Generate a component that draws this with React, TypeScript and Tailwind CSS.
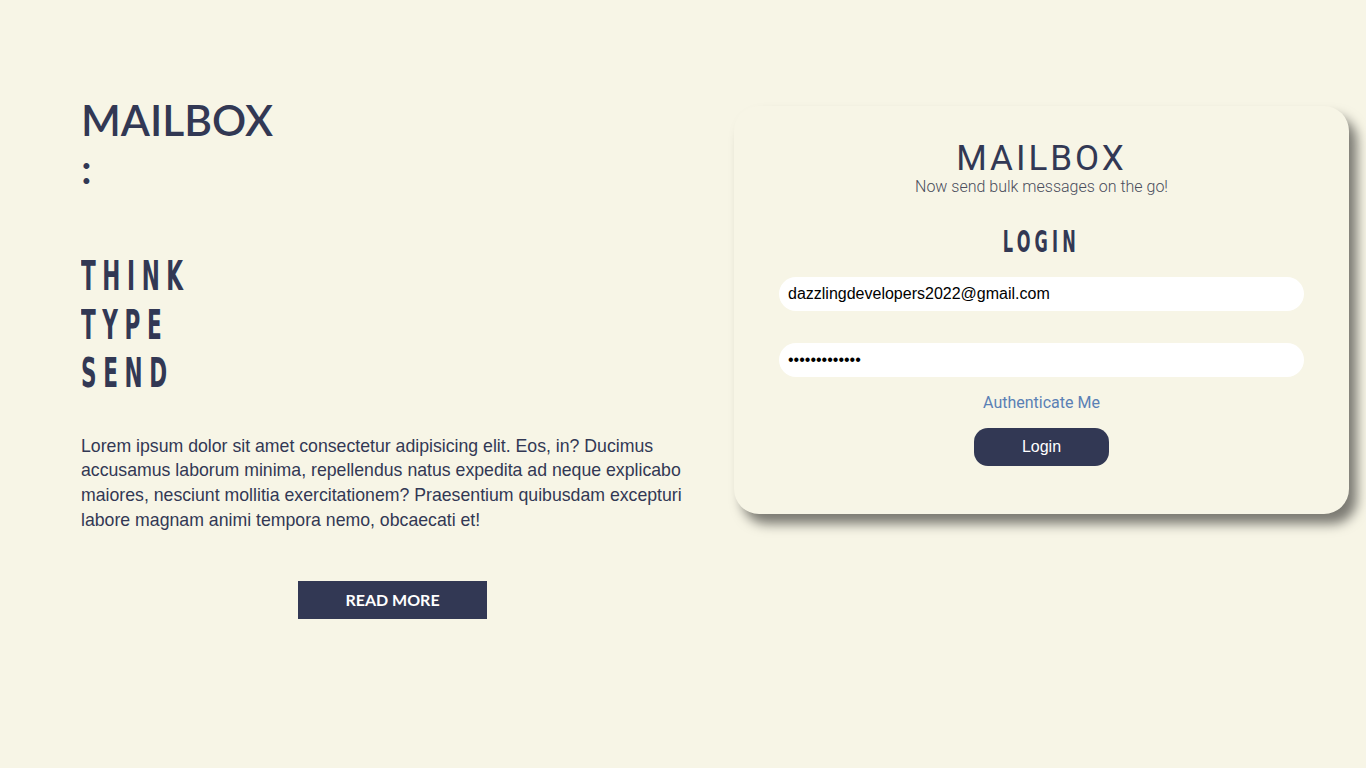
import React from "react";

const navy = "text-[#323854]";

export default function App() {
  return (
    <div className="min-h-[768px] w-full bg-[#f7f5e6] font-['Liberation_Sans',Arial,sans-serif]">
      <div className="flex items-start pl-[81px] pt-[96px]">
        {/* left column */}
        <div className="w-[623px] flex flex-col">
          <h1 className={`font-['Lato',sans-serif] text-[42.5px] leading-[48px] font-semibold ${navy}`}>
            MAILBOX
            <br />:
          </h1>

          <div className="mt-[60px] flex flex-col">
            {["THINK", "TYPE", "SEND"].map((w) => (
              <span
                key={w}
                className={`h-[48.5px] leading-[48.5px] font-['Liberation_Sans_Narrow','DejaVu_Sans_Condensed',sans-serif] font-bold text-[40px] tracking-[11px] inline-block origin-left scale-x-[0.6] ${navy}`}
              >
                {w}
              </span>
            ))}
          </div>

          <p className={`mt-[36px] text-[17.7px] leading-[24.7px] ${navy} pr-[10px]`}>
            Lorem ipsum dolor sit amet consectetur adipisicing elit. Eos, in? Ducimus accusamus laborum minima, repellendus natus expedita ad neque explicabo maiores, nesciunt mollitia exercitationem? Praesentium quibusdam excepturi labore magnam animi tempora nemo, obcaecati et!
          </p>

          <div className="mt-[49px] flex justify-center">
            <button className="w-[189px] h-[38px] bg-[#323854] text-white font-['Lato',sans-serif] font-bold text-[16px]">
              READ MORE
            </button>
          </div>
        </div>

        {/* login card */}
        <div className="ml-[30px] mt-[10px] w-[615px] rounded-[25px] bg-[#f7f5e6] shadow-[8px_10px_12px_rgba(0,0,0,0.5)] px-[45px] pt-[34px] pb-[48px] flex flex-col items-center">
          <h2 className={`font-['Roboto',sans-serif] text-[35px] leading-[37px] tracking-[3px] ${navy}`}>MAILBOX</h2>
          <p className="font-['Roboto',sans-serif] font-light text-[16px] leading-[19px] text-[#4a4d5c]">
            Now send bulk messages on the go!
          </p>
          <h3
            className={`mt-[28px] h-[36px] leading-[36px] font-['Liberation_Sans_Narrow','DejaVu_Sans_Condensed',sans-serif] font-bold text-[30px] tracking-[7px] scale-x-[0.6] ${navy}`}
          >
            LOGIN
          </h3>

          <input
            className="mt-[17px] w-full h-[34px] rounded-full bg-white px-[9px] text-[16px] text-black outline-none"
            defaultValue="dazzlingdevelopers2022@gmail.com"
          />
          <input
            type="password"
            className="mt-[32px] w-full h-[34px] rounded-full bg-white px-[9px] text-[16px] text-black outline-none"
            defaultValue="kjhsdf8923jkl"
          />

          <a className="mt-[16px] font-['Roboto',sans-serif] text-[16px] leading-[19px] text-[#5a80b5]">Authenticate Me</a>

          <button className="mt-[16px] w-[135px] h-[38px] rounded-[14px] bg-[#323854] text-white text-[16px]">
            Login
          </button>
        </div>
      </div>
    </div>
  );
}
